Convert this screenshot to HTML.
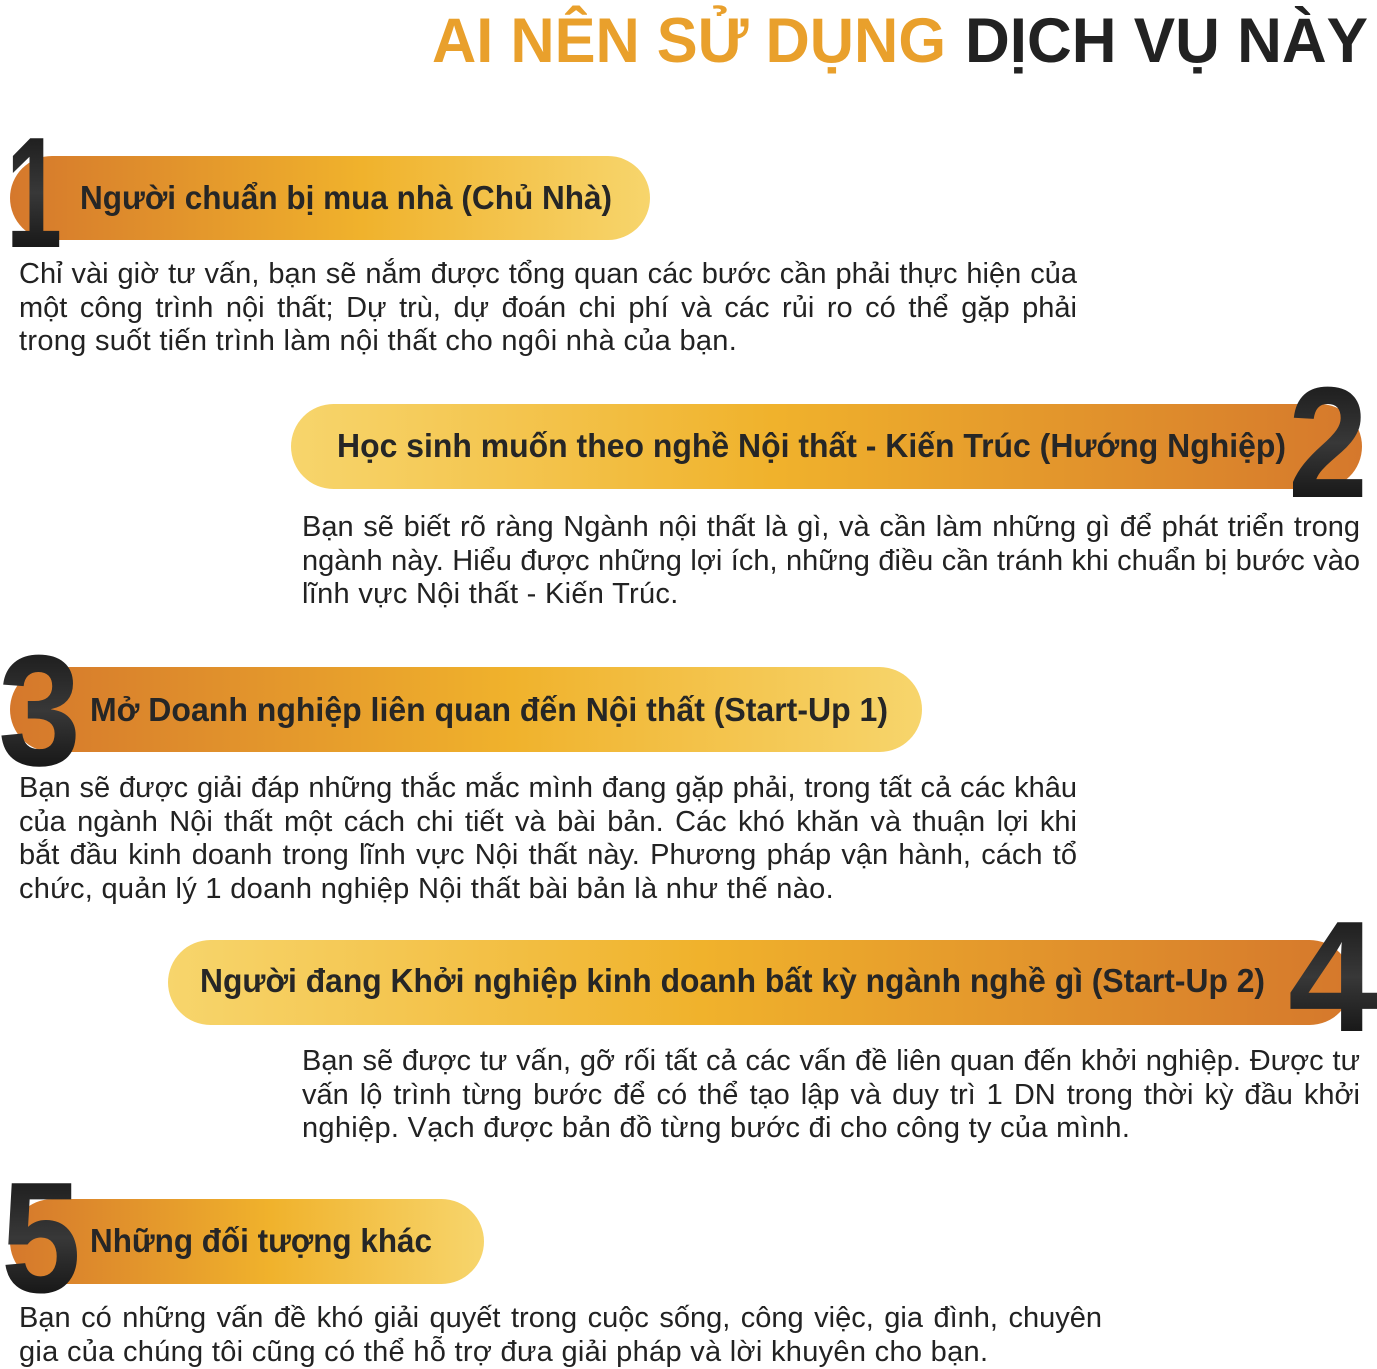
<!DOCTYPE html>
<html><head><meta charset="utf-8">
<style>
html,body{margin:0;padding:0;background:#fff;}
body{width:1377px;height:1369px;position:relative;overflow:hidden;font-family:"Liberation Sans","Noto Sans CJK SC",sans-serif;}
svg{position:absolute;left:0;top:0;}
.p{position:absolute;font-size:29px;letter-spacing:0;color:#222;line-height:33.6px;}
.p div{white-space:nowrap;text-align:justify;text-align-last:justify;height:33.6px;}
.p div.l{text-align-last:left;letter-spacing:0.3px;}
</style></head><body>
<svg width="1377" height="1369" viewBox="0 0 1377 1369">
<defs>
<linearGradient id="gL" x1="0" x2="1" y1="0" y2="0"><stop offset="0" stop-color="#d5782c"/><stop offset="0.55" stop-color="#f0b22c"/><stop offset="1" stop-color="#f7d56c"/></linearGradient>
<linearGradient id="gR" x1="0" x2="1" y1="0" y2="0"><stop offset="0" stop-color="#f7d56c"/><stop offset="0.45" stop-color="#f0b22c"/><stop offset="1" stop-color="#d5782c"/></linearGradient>
<linearGradient id="gN" x1="0" x2="0" y1="0" y2="1"><stop offset="0" stop-color="#111"/><stop offset="0.5" stop-color="#383838"/><stop offset="1" stop-color="#050505"/></linearGradient>
</defs>
<text y="62" font-family="Liberation Sans" font-weight="bold" font-size="63"><tspan x="432" fill="#e9a02c" textLength="514" lengthAdjust="spacingAndGlyphs">AI NÊN SỬ DỤNG</tspan><tspan x="965" fill="#222" textLength="403" lengthAdjust="spacingAndGlyphs">DỊCH VỤ NÀY</tspan></text>

<rect x="10" y="156" width="640" height="84" rx="42" fill="url(#gL)"/>
<rect x="291" y="404" width="1071" height="85" rx="42.5" fill="url(#gR)"/>
<rect x="10" y="667" width="912" height="85" rx="42.5" fill="url(#gL)"/>
<rect x="168" y="940" width="1184" height="85" rx="42.5" fill="url(#gR)"/>
<rect x="10" y="1199" width="474" height="85" rx="42.5" fill="url(#gL)"/>

<g font-family="Liberation Sans" font-weight="bold" font-size="33" fill="#262626">
<text x="80" y="209" textLength="532" lengthAdjust="spacingAndGlyphs">Người chuẩn bị mua nhà (Chủ Nhà)</text>
<text x="337" y="457" textLength="949" lengthAdjust="spacingAndGlyphs">Học sinh muốn theo nghề Nội thất - Kiến Trúc (Hướng Nghiệp)</text>
<text x="90" y="721" textLength="798" lengthAdjust="spacingAndGlyphs">Mở Doanh nghiệp liên quan đến Nội thất (Start-Up 1)</text>
<text x="200" y="992" textLength="1065" lengthAdjust="spacingAndGlyphs">Người đang Khởi nghiệp kinh doanh bất kỳ ngành nghề gì (Start-Up 2)</text>
<text x="90" y="1252" textLength="342" lengthAdjust="spacingAndGlyphs">Những đối tượng khác</text>
</g>

<g font-family="Liberation Sans" font-weight="bold" font-size="158" fill="url(#gN)">
<text x="6" y="247" textLength="56" lengthAdjust="spacingAndGlyphs">1</text>
<text x="1288" y="497" textLength="80" lengthAdjust="spacingAndGlyphs">2</text>
<text x="-2" y="765" textLength="83" lengthAdjust="spacingAndGlyphs">3</text>
<text x="1288" y="1031" textLength="90" lengthAdjust="spacingAndGlyphs">4</text>
<text x="1" y="1292" textLength="80" lengthAdjust="spacingAndGlyphs">5</text>
</g>
</svg>

<div class="p" style="left:19px;top:258px;width:1058px;">
<div>Chỉ vài giờ tư vấn, bạn sẽ nắm được tổng quan các bước cần phải thực hiện của</div>
<div>một công trình nội thất; Dự trù, dự đoán chi phí và các rủi ro có thể gặp phải</div>
<div class="l">trong suốt tiến trình làm nội thất cho ngôi nhà của bạn.</div>
</div>
<div class="p" style="left:302px;top:511px;width:1058px;">
<div>Bạn sẽ biết rõ ràng Ngành nội thất là gì, và cần làm những gì để phát triển trong</div>
<div>ngành này. Hiểu được những lợi ích, những điều cần tránh khi chuẩn bị bước vào</div>
<div class="l">lĩnh vực Nội thất - Kiến Trúc.</div>
</div>
<div class="p" style="left:19px;top:772px;width:1058px;">
<div>Bạn sẽ được giải đáp những thắc mắc mình đang gặp phải, trong tất cả các khâu</div>
<div>của ngành Nội thất một cách chi tiết và bài bản. Các khó khăn và thuận lợi khi</div>
<div>bắt đầu kinh doanh trong lĩnh vực Nội thất này. Phương pháp vận hành, cách tổ</div>
<div class="l">chức, quản lý 1 doanh nghiệp Nội thất bài bản là như thế nào.</div>
</div>
<div class="p" style="left:302px;top:1045px;width:1058px;">
<div>Bạn sẽ được tư vấn, gỡ rối tất cả các vấn đề liên quan đến khởi nghiệp. Được tư</div>
<div>vấn lộ trình từng bước để có thể tạo lập và duy trì 1 DN trong thời kỳ đầu khởi</div>
<div class="l">nghiệp. Vạch được bản đồ từng bước đi cho công ty của mình.</div>
</div>
<div class="p" style="left:19px;top:1302px;width:1083px;">
<div>Bạn có những vấn đề khó giải quyết trong cuộc sống, công việc, gia đình, chuyên</div>
<div class="l">gia của chúng tôi cũng có thể hỗ trợ đưa giải pháp và lời khuyên cho bạn.</div>
</div>
</body></html>
